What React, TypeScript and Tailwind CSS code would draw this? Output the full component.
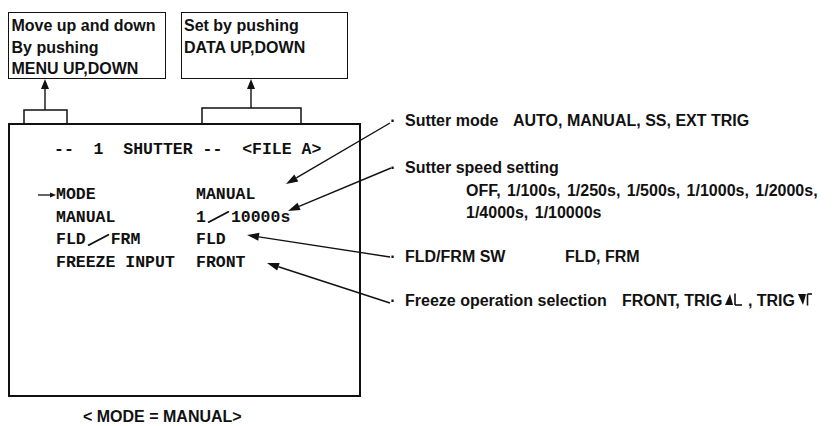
import React from "react";

type Pt = { x1: number; y1: number; x2: number; y2: number };

// leader line ending in a filled arrowhead at (x2, y2)
const Arrow: React.FC<Pt & { len?: number; half?: number }> = ({ x1, y1, x2, y2, len = 12, half = 4 }) => {
  const d = Math.hypot(x2 - x1, y2 - y1);
  const ux = (x2 - x1) / d;
  const uy = (y2 - y1) / d;
  const bx = x2 - ux * len;
  const by = y2 - uy * len;
  const pts = `${x2},${y2} ${bx - uy * half},${by + ux * half} ${bx + uy * half},${by - ux * half}`;
  return (
    <g>
      <line x1={x1} y1={y1} x2={bx} y2={by} stroke="#111" strokeWidth={1.4} />
      <polygon points={pts} fill="#111" />
    </g>
  );
};

// wide slash used on the monitor screen
const Slash = () => (
  <span className="inline-block w-[25px]">
    <svg width="25" height="12" className="inline-block">
      <line x1="2" y1="11.5" x2="23" y2="0.5" stroke="#111" strokeWidth="1.8" />
    </svg>
  </span>
);

const Cursor = () => (
  <svg width="19" height="12" className="inline-block">
    <line x1="1" y1="6" x2="15" y2="6" stroke="#111" strokeWidth="1.3" />
    <polygon points="19,6 13,3.5 13,8.5" fill="#111" />
  </svg>
);

const RiseIcon = () => (
  <svg width="18" height="13" className="inline-block ml-[3px]">
    <polygon points="0,12 5,1 8,12" fill="#111" />
    <line x1="10" y1="0.5" x2="10" y2="12" stroke="#111" strokeWidth="1.6" />
    <line x1="10" y1="12" x2="17" y2="12" stroke="#111" strokeWidth="1.6" />
  </svg>
);

const FallIcon = () => (
  <svg width="14" height="13" className="inline-block ml-[3px]">
    <polygon points="0,1 8,1 5,12" fill="#111" />
    <line x1="9.5" y1="1" x2="9.5" y2="12.5" stroke="#111" strokeWidth="1.6" />
    <line x1="9.5" y1="1" x2="14" y2="1" stroke="#111" strokeWidth="1.6" />
  </svg>
);

const rows: { label: React.ReactNode; value: React.ReactNode; cursor?: boolean }[] = [
  { label: "MODE", value: "MANUAL", cursor: true },
  { label: "MANUAL", value: <>1<Slash />10000s</> },
  { label: <>FLD<Slash />FRM</>, value: "FLD" },
  { label: "FREEZE INPUT", value: "FRONT" },
];

const Note: React.FC<{ children: React.ReactNode; className?: string }> = ({ children, className = "" }) => (
  <div className={`flex h-[22.5px] items-baseline whitespace-nowrap ${className}`}>
    <span className="w-[8px] text-center">·</span>
    <span className="ml-[8px] flex items-baseline">{children}</span>
  </div>
);

export default function App() {
  return (
    <div className="relative h-[426px] w-[840px] overflow-hidden bg-white text-[#111] font-['Liberation_Sans',Arial,sans-serif] font-bold">
      <div className="flex">
        {/* left: callouts, screen and caption */}
        <div className="ml-[8px] w-[353px]">
          <div className="flex pt-[12px] text-[16px] leading-[21.5px]">
            <div className="h-[67px] w-[158px] border-[1.5px] border-[#111] pl-[2.5px] pt-[2px]">
              <div>Move up and down</div>
              <div>By pushing</div>
              <div>MENU UP,DOWN</div>
            </div>
            <div className="ml-[15px] h-[67px] w-[167px] border-[1.5px] border-[#111] pl-[2px] pt-[2px]">
              <div>Set by pushing</div>
              <div>DATA UP,DOWN</div>
            </div>
          </div>

          <svg width="353" height="44" className="block">
            <Arrow x1={37} y1={31} x2={37} y2={0} len={10} half={4} />
            <rect x="16" y="31" width="43" height="14" fill="none" stroke="#111" strokeWidth="1.5" />
            <Arrow x1={243} y1={29} x2={243} y2={0} len={10} half={4} />
            <rect x="194" y="29" width="99" height="16" fill="none" stroke="#111" strokeWidth="1.5" />
          </svg>

          <div className="h-[274px] border-2 border-[#111] font-['Liberation_Mono','Courier_New',monospace] text-[16.5px] leading-[22.5px]">
            <div className="mt-[14px] whitespace-pre pl-[44px]">{"--  1  SHUTTER --  <FILE A>"}</div>
            <div className="mt-[22.5px]">
              {rows.map((r, i) => (
                <div key={i} className="flex items-baseline whitespace-pre pl-[27px]">
                  <span className="w-[19px]">{r.cursor && <Cursor />}</span>
                  <span className="w-[140px]">{r.label}</span>
                  <span>{r.value}</span>
                </div>
              ))}
            </div>
          </div>

          <div className="mt-[9px] pl-[75px] text-[16px] leading-[21.5px]">&lt; MODE = MANUAL&gt;</div>
        </div>

        {/* right: setting notes */}
        <div className="ml-[28px] pt-[110px] text-[16px] leading-[22.5px]">
          <Note>
            <span className="w-[108px]">Sutter mode</span>
            <span>AUTO, MANUAL, SS, EXT TRIG</span>
          </Note>
          <Note className="mt-[24.5px]">Sutter speed setting</Note>
          <div className="h-[22.5px] pl-[77px] whitespace-nowrap [word-spacing:2px]">
            OFF, 1/100s, 1/250s, 1/500s, 1/1000s, 1/2000s,
          </div>
          <div className="h-[22px] pl-[77px] whitespace-nowrap [word-spacing:2px]">1/4000s, 1/10000s</div>
          <Note className="mt-[21.5px]">
            <span className="w-[160px]">FLD/FRM SW</span>
            <span>FLD, FRM</span>
          </Note>
          <Note className="mt-[21.5px]">
            <span className="w-[217px]">Freeze operation selection</span>
            <span className="flex items-baseline">
              FRONT, TRIG
              <RiseIcon />
              <span className="whitespace-pre"> , TRIG</span>
              <FallIcon />
            </span>
          </Note>
        </div>
      </div>

      {/* leader lines from the notes to the screen */}
      <svg width="840" height="426" className="pointer-events-none absolute inset-0">
        <Arrow x1={390} y1={123} x2={286} y2={184} />
        <Arrow x1={391} y1={168} x2={288} y2={211} />
        <Arrow x1={390} y1={257} x2={247} y2={235} />
        <Arrow x1={390} y1={303} x2={267} y2={263} />
      </svg>
    </div>
  );
}
